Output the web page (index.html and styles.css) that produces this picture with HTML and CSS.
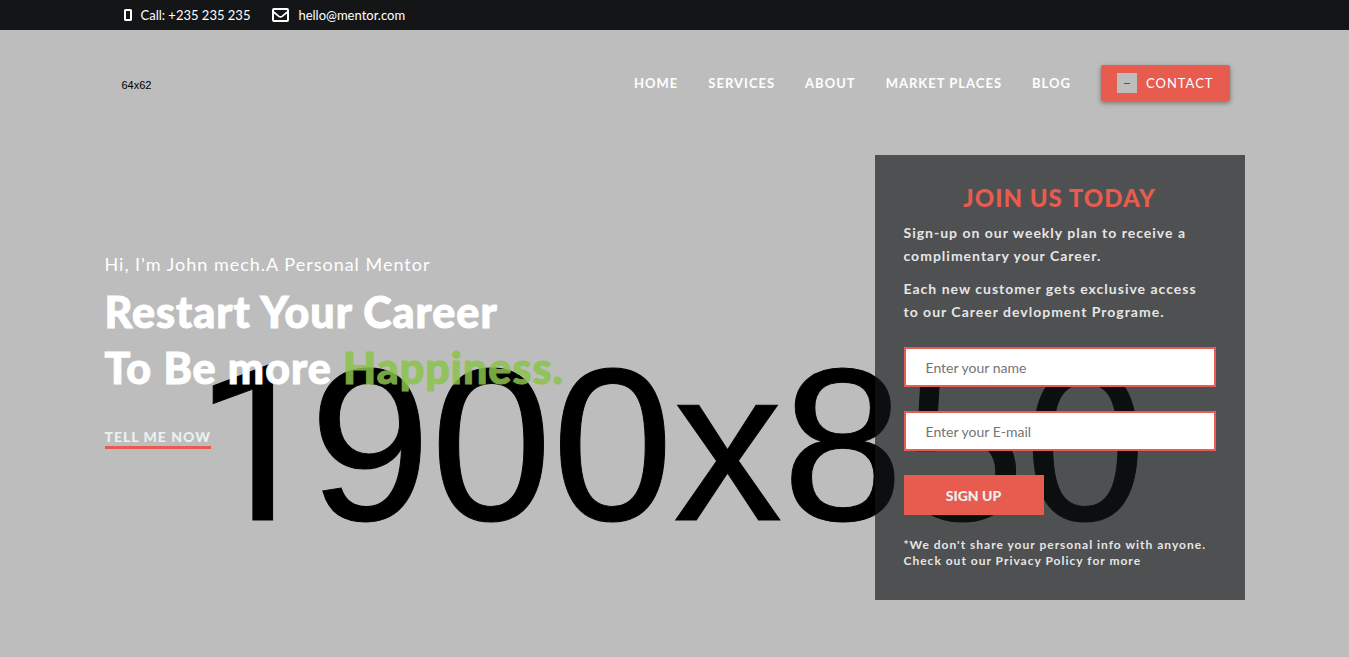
FILE: index.html
```html
<!DOCTYPE html>
<html lang="en">
<head>
<meta charset="utf-8">
<meta name="viewport" content="width=device-width, initial-scale=1">
<title>Personal Mentor</title>
<link rel="stylesheet" href="styles.css">
</head>
<body>
<div class="topbar">
  <div class="container topbar-list">
    <a class="topbar-link" href="tel:+235235235">
      <svg class="icon-phone" width="8" height="12" viewBox="0 0 8 12" aria-hidden="true"><path fill="currentColor" fill-rule="evenodd" d="M1.500 0h5A1.500 1.500 0 0 1 8 1.500v9A1.500 1.500 0 0 1 6.500 12h-5A1.500 1.500 0 0 1 0 10.500v-9A1.500 1.500 0 0 1 1.500 0zM2 2v8h4V2z"/></svg>
      <span>Call: +235 235 235</span>
    </a>
    <a class="topbar-link" href="mailto:hello@mentor.com">
      <svg class="icon-mail" width="17" height="14" viewBox="0 0 17 14" aria-hidden="true"><rect x="1" y="1" width="15" height="12" rx="1" fill="none" stroke="currentColor" stroke-width="2"/><path d="M1 3.500l5.600 4.600c1.300 1 2.500 1 3.800 0L16 3.500" fill="none" stroke="currentColor" stroke-width="1.700"/></svg>
      <span>hello@mentor.com</span>
    </a>
  </div>
</div>
<div class="hero">
  <div class="backdrop" aria-hidden="true"><span class="backdrop-one">1</span>900x850</div>
  <header class="container header">
    <a class="logo" href="#">64x62</a>
    <nav class="nav">
      <a href="#">HOME</a>
      <a href="#">SERVICES</a>
      <a href="#">ABOUT</a>
      <a href="#">MARKET PLACES</a>
      <a href="#">BLOG</a>
      <a class="contact" href="#"><span class="contact-icon"></span>CONTACT</a>
    </nav>
  </header>
  <main class="container main">
    <section class="intro">
      <p class="greeting">Hi, I'm John mech.A Personal Mentor</p>
      <h1 class="title">Restart Your Career<br>To Be more <span class="accent">Happiness.</span></h1>
      <a class="tell" href="#">TELL ME NOW</a>
    </section>
    <form class="panel">
      <h2 class="panel-title">JOIN US TODAY</h2>
      <p class="panel-text">Sign-up on our weekly plan to receive a complimentary your Career.</p>
      <p class="panel-text">Each new customer gets exclusive access to our Career devlopment Programe.</p>
      <input class="field" type="text" placeholder="Enter your name" aria-label="Your name">
      <input class="field" type="email" placeholder="Enter your E-mail" aria-label="Your e-mail">
      <button class="submit" type="submit">SIGN UP</button>
      <p class="note">*We don't share your personal info with anyone. Check out our Privacy Policy for more</p>
    </form>
  </main>
</div>
</body>
</html>
```
FILE: styles.css
```css
* { box-sizing: border-box; }
html, body { height: 100%; }
body {
  margin: 0;
  display: flex;
  flex-direction: column;
  background: #bdbdbd;
  color: #fff;
  font-family: Lato, sans-serif;
}
a { color: inherit; text-decoration: none; }
h1, h2, p { margin: 0; }
.container {
  width: 100%;
  max-width: 1170px;
  margin: 0 auto;
  padding: 0 15px;
}
.topbar { background: #131517; }
.topbar-list { display: flex; gap: 22px; padding-left: 34px; }
.topbar-link {
  display: flex;
  align-items: center;
  gap: 9px;
  font-size: 13px;
  line-height: 30px;
}
.hero { position: relative; flex: 1; overflow: hidden; }
.backdrop {
  position: absolute;
  top: 290px;
  left: 0;
  right: 0;
  padding-right: 8px;
  text-align: center;
  white-space: nowrap;
  color: #000;
  font: 218px/250px "Liberation Sans", sans-serif;
  -webkit-text-stroke: 1px #000;
}
.backdrop-one { margin-right: -8px; font-family: Roboto, sans-serif; }
.header {
  position: relative;
  display: flex;
  align-items: center;
  justify-content: space-between;
  padding: 22px 30px 38px 15px;
}
.logo {
  width: 64px;
  height: 62px;
  color: #000;
  font: 11px/66px "Liberation Sans", sans-serif;
  text-align: center;
}
.nav {
  display: flex;
  align-items: center;
  gap: 30px;
  font-size: 13px;
  font-weight: 700;
  letter-spacing: 1px;
}
.contact {
  display: flex;
  align-items: center;
  gap: 9px;
  height: 36px;
  padding: 0 16px;
  border-radius: 2px;
  background: #e85c4f;
  box-shadow: 0 2px 5px rgba(0, 0, 0, .4);
  font-weight: 400;
}
.contact-icon {
  display: flex;
  align-items: center;
  justify-content: center;
  width: 20px;
  height: 20px;
  background: #bdbdbd;
}
.contact-icon::before { content: ""; width: 6px; height: 1px; background: #555; }
.main {
  position: relative;
  display: flex;
  justify-content: space-between;
  align-items: flex-start;
  padding-top: 3px;
}
.intro { padding-top: 96px; letter-spacing: 1px; }
.greeting { font-size: 18px; line-height: 26px; }
.title {
  margin-top: 7px;
  font-size: 43px;
  font-weight: 900;
  line-height: 56px;
  -webkit-text-stroke: 1px currentColor;
}
.accent { color: #8bc34a; opacity: .85; }
.tell {
  display: inline-block;
  margin-top: 32px;
  border-bottom: 3px solid #e85c4f;
  color: #ecf0f1;
  font-size: 14px;
  font-weight: 900;
  line-height: 18px;
}
.panel {
  width: 370px;
  padding: 28px 29px 31px;
  background: rgba(19, 21, 23, .65);
  color: #e6e6e6;
  letter-spacing: 1px;
}
.panel-title {
  color: #e85c4f;
  font-size: 24px;
  font-weight: 900;
  line-height: 30px;
  text-align: center;
}
.panel-text {
  max-width: 306px;
  margin: 8px 0 10px;
  font-size: 14px;
  font-weight: 700;
  line-height: 23px;
}
.field {
  display: block;
  width: 100%;
  height: 40px;
  margin: 24px 0;
  padding: 0 20px;
  border: 2px solid #e85c4f;
  border-radius: 0;
  background: #fff;
  color: #333;
  font: 14px Lato, sans-serif;
}
.field::placeholder { color: #757575; }
.submit {
  display: block;
  width: 140px;
  height: 40px;
  border: 0;
  background: #e85c4f;
  color: #ecf0f1;
  font: 900 14px Lato, sans-serif;
}
.note {
  margin-top: 22px;
  font-size: 12px;
  font-weight: 700;
  line-height: 16px;
}
```
